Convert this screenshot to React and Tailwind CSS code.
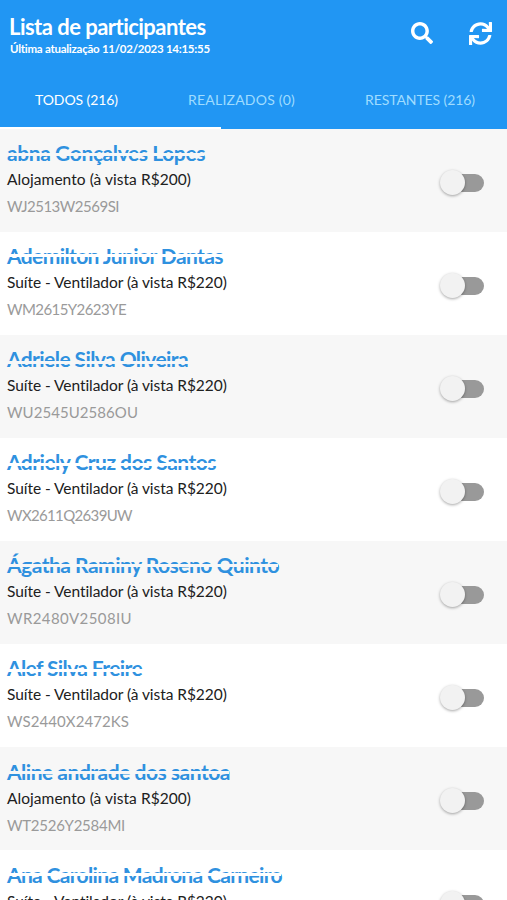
import { useLayoutEffect, useRef, useState } from "react";
import { FaSearch, FaSync } from "react-icons/fa";

// Single line of text whose tracking adapts so that it spans `width` pixels.
function Line({ text, width, className }) {
  const ref = useRef(null);
  const [spacing, setSpacing] = useState(0);
  useLayoutEffect(() => {
    const natural = ref.current.getBoundingClientRect().width;
    setSpacing((width - natural) / text.length);
  }, [text, width]);
  return (
    <div className={`whitespace-nowrap ${className}`}>
      <span ref={ref} style={{ letterSpacing: `${spacing}px` }}>{text}</span>
    </div>
  );
}

const SUITE = "Suíte - Ventilador (à vista R$220)";
const DORM = "Alojamento (à vista R$200)";

const people = [
  { name: "abna Gonçalves Lopes", nameW: 198, room: DORM, code: "WJ2513W2569SI", codeW: 112, strike: "top-[13px]" },
  { name: "Ademilton Junior Dantas", nameW: 216, room: SUITE, code: "WM2615Y2623YE", codeW: 119, strike: "top-[11px]" },
  { name: "Adriele Silva Oliveira", nameW: 181, room: SUITE, code: "WU2545U2586OU", codeW: 131, strike: "top-[15px]" },
  { name: "Adriely Cruz dos Santos", nameW: 209, room: SUITE, code: "WX2611Q2639UW", codeW: 125, strike: "top-[14px]" },
  { name: "Ágatha Raminy Roseno Quinto", nameW: 272, room: SUITE, code: "WR2480V2508IU", codeW: 125, strike: "top-[12px]" },
  { name: "Alef Silva Freire", nameW: 135, room: SUITE, code: "WS2440X2472KS", codeW: 122, strike: "top-[14px]" },
  { name: "Aline andrade dos santoa", nameW: 223, room: DORM, code: "WT2526Y2584MI", codeW: 118, strike: "top-[12px]" },
  { name: "Ana Carolina Madrona Carneiro", nameW: 275, room: SUITE, code: "WA2532C2590AN", codeW: 124, strike: "top-[11px]" },
];

function Toggle() {
  return (
    <button className="relative mr-[23px] h-[18px] w-[42px] rounded-full bg-[#999999]">
      <span className="absolute -left-[2px] -top-[4px] size-[25px] rounded-full bg-[#f2f2f2] shadow-[0_1px_3px_rgba(0,0,0,0.35)]" />
    </button>
  );
}

function Row({ person, shaded }) {
  return (
    <li className={`flex h-[103.1px] shrink-0 items-start justify-between ${shaded ? "bg-[#f7f7f7]" : "bg-white"}`}>
      <div className="pl-[7px] pt-[11.3px]">
        <div className="relative h-[26px]">
          <Line text={person.name} width={person.nameW} className="text-[21px] font-bold leading-[26px] text-[#2f91df]" />
          <span className={`absolute -left-px h-[3px] w-full ${person.strike} ${shaded ? "bg-[#f7f7f7]" : "bg-white"}`} />
        </div>
        <Line text={person.room} width={person.room === DORM ? 184 : 220} className="text-[15.5px] leading-[26px] text-[#202020]" />
        <Line text={person.code} width={person.codeW} className="text-[15px] leading-[28px] text-[#9a9a9a]" />
      </div>
      <div className="flex pt-[45px]"><Toggle /></div>
    </li>
  );
}

export default function App() {
  return (
    <main className="flex h-[900px] w-[507px] flex-col overflow-hidden bg-white font-['Lato',sans-serif]">
      <header className="flex h-[128.7px] shrink-0 flex-col bg-[#2196f3] text-white">
        <div className="flex h-[72px] justify-between">
          <div className="pl-[9px] pt-[13px]">
            <Line text="Lista de participantes" width={197} className="text-[22px] font-bold leading-[27px]" />
            <Line text="Última atualização 11/02/2023 14:15:55" width={200} className="pl-px text-[11.5px] font-bold leading-[18px]" />
          </div>
          <div className="flex gap-[36px] pr-[15px] pt-[22px]">
            <FaSearch className="size-[22px]" />
            <FaSync className="size-[23px]" />
          </div>
        </div>
        <nav className="flex h-[55px] items-center pl-[35px] pt-px text-[14px]">
          <Line text="TODOS (216)" width={83} className="w-[153px]" />
          <Line text="REALIZADOS (0)" width={107} className="w-[177px] text-[#9fdcff]" />
          <Line text="RESTANTES (216)" width={110} className="text-[#9fdcff]" />
        </nav>
        <div className="h-[2px] w-[221px] bg-white" />
      </header>
      <ul className="flex flex-col">
        {people.map((p, i) => <Row key={p.name} person={p} shaded={i % 2 === 0} />)}
      </ul>
    </main>
  );
}
